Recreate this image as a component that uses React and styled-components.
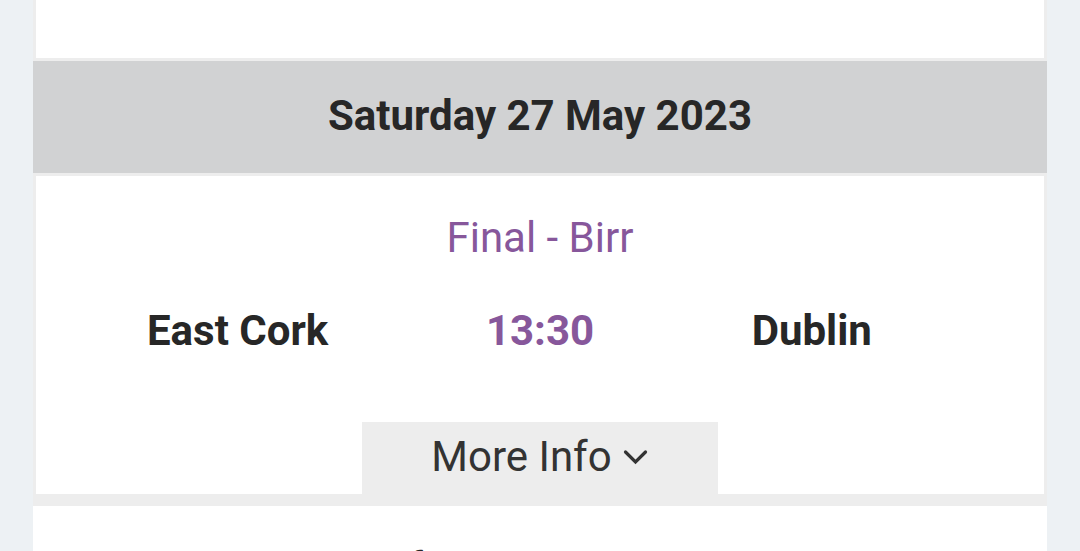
import React from 'react';
import styled, { createGlobalStyle } from 'styled-components';

const GlobalStyle = createGlobalStyle`
  * {
    box-sizing: border-box;
  }

  body {
    margin: 0;
    background: #edf1f4;
    color: #272727;
    font-family: Roboto, "Liberation Sans", sans-serif;
    font-size: 42px;
    line-height: 48px;
  }
`;

const Page = styled.main`
  height: 100vh;
  padding: 0 33px;
  overflow: hidden;
`;

const Card = styled.article`
  border: 3px solid #ededed;
  border-bottom-width: ${(props) => (props.$last ? '12px' : '3px')};
  background: white;
`;

const PreviousCard = styled(Card)`
  border-top: 0;
  padding-top: 58px;
`;

const DateHeading = styled.h2`
  margin: 0;
  padding: 31px 0 33px;
  background: #d1d2d3;
  font-size: 42px;
  font-weight: 700;
  text-align: center;
`;

const Round = styled.p`
  margin: 0;
  padding-top: 38px;
  color: #87579b;
  text-align: center;
`;

const Teams = styled.div`
  display: grid;
  grid-template-columns: 1fr 42% 1fr;
  margin: 45px 0 67px;
  font-weight: 700;
`;

const Team = styled.span`
  text-align: ${(props) => (props.$home ? 'right' : 'left')};
`;

const KickOff = styled.time`
  color: #87579b;
  text-align: center;
`;

const MoreInfo = styled.button`
  display: flex;
  align-items: center;
  gap: 11px;
  margin: 0 auto;
  padding: 11px 70px 13px 69px;
  border: 0;
  background: #ededed;
  color: #333333;
  font: inherit;
  cursor: pointer;
`;

const NextSection = styled.section`
  padding: 38px 0 40px 37%;
  background: white;
`;

const Chevron = () => (
  <svg width="25" height="16" viewBox="0 0 25 16" fill="none" aria-hidden="true">
    <path
      d="M2.5 3 12.5 13 22.5 3"
      stroke="currentColor"
      strokeWidth="3.2"
      strokeLinecap="round"
      strokeLinejoin="miter"
    />
  </svg>
);

const App = () => {
  return (
    <>
      <GlobalStyle />
      <Page>
        <PreviousCard />
        <DateHeading>Saturday 27 May 2023</DateHeading>
        <Card $last>
          <Round>Final - Birr</Round>
          <Teams>
            <Team $home>East Cork</Team>
            <KickOff dateTime="2023-05-27T13:30">13:30</KickOff>
            <Team>Dublin</Team>
          </Teams>
          <MoreInfo type="button">
            More Info
            <Chevron />
          </MoreInfo>
        </Card>
        <NextSection>f</NextSection>
      </Page>
    </>
  );
};

export default App;
